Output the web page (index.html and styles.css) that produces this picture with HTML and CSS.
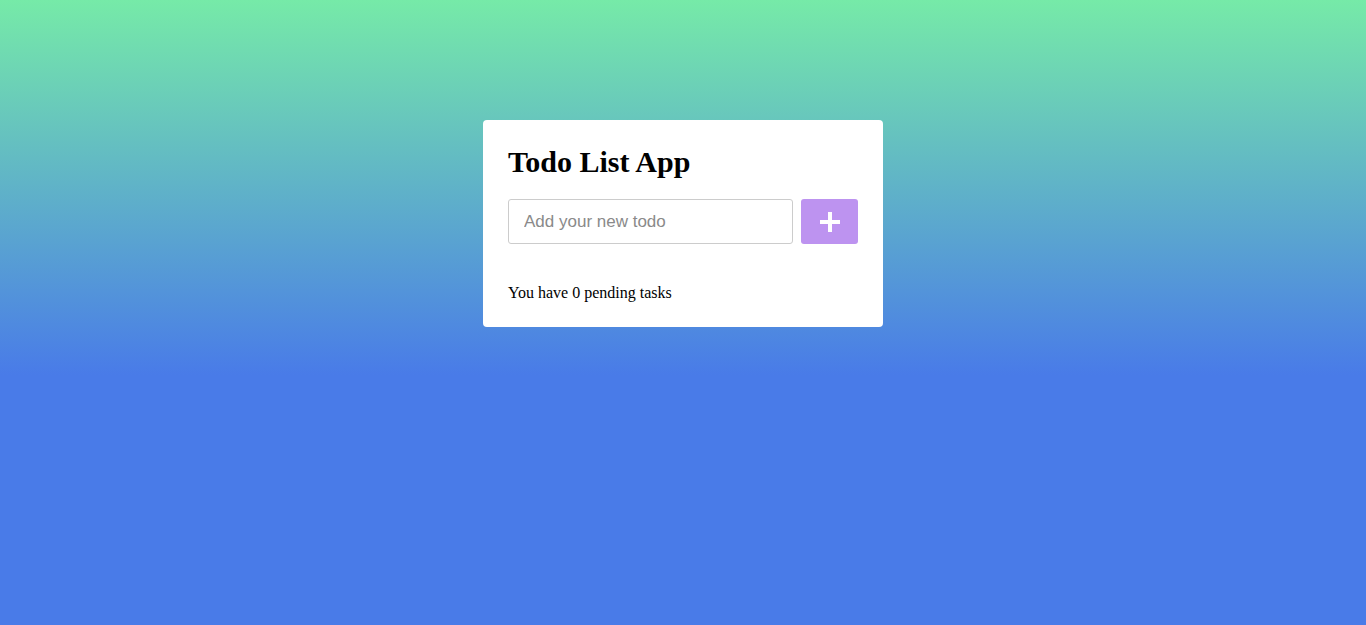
FILE: index.html
```html
<!DOCTYPE html>
<html lang="en">
<head>
<meta charset="utf-8">
<title>Todo List App</title>
<link rel="stylesheet" href="styles.css">
</head>
<body>
<div class="wrapper">
  <h1 class="title">Todo List App</h1>
  <div class="input-field">
    <input class="todo-input" type="text" placeholder="Add your new todo">
    <button class="add-btn" aria-label="Add">
      <svg width="20" height="20" viewBox="0 0 20 20"><path d="M10 0v20M0 10h20" stroke="#fff" stroke-width="4"/></svg>
    </button>
  </div>
  <ul class="todo-list"></ul>
  <div class="footer">You have 0 pending tasks</div>
</div>
</body>
</html>
```
FILE: styles.css
```css
html, body {
  margin: 0;
  height: 100%;
}
body {
  background: linear-gradient(to bottom, #76eaa8 0px, #497be8 375px, #497be8 100%);
  background-color: #497be8;
  font-family: "Liberation Serif", "Times New Roman", serif;
  padding-top: 120px;
  box-sizing: border-box;
}
.wrapper {
  width: 400px;
  box-sizing: border-box;
  margin: 0 auto;
  background: #fff;
  border-radius: 4px;
  padding: 25px;
}
.title {
  margin: 0 0 20px;
  font-size: 30px;
  line-height: 34px;
  font-weight: bold;
  color: #000;
}
.input-field {
  display: flex;
  gap: 8px;
  height: 45px;
}
.todo-input {
  flex: 1;
  min-width: 0;
  height: 45px;
  box-sizing: border-box;
  border: 1px solid #ccc;
  border-radius: 3px;
  padding: 0 15px;
  font-family: "Liberation Sans", Arial, sans-serif;
  font-size: 17px;
  outline: none;
}
.todo-input::placeholder {
  color: #8a8a8a;
}
.add-btn {
  width: 57px;
  height: 45px;
  border: none;
  border-radius: 3px;
  background: #bd93f0;
  display: flex;
  align-items: center;
  justify-content: center;
  padding: 0;
}
.todo-list {
  margin: 0;
  padding: 0;
  list-style: none;
}
.footer {
  margin-top: 40px;
  font-size: 16px;
  line-height: 18px;
  color: #000;
}
```
